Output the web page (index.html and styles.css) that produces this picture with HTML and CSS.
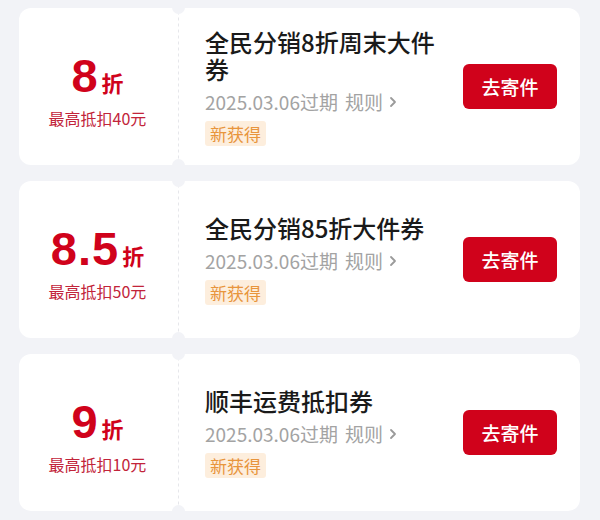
FILE: index.html
```html
<!DOCTYPE html>
<html lang="zh-CN">

<head>
    <meta charset="UTF-8">
    <title>优惠券</title>
    <link rel="stylesheet" href="styles.css">
</head>

<body>
    <div class="coupon-list">
        <div class="coupon">
            <div class="coupon-left">
                <div class="rate"><span class="rate-num">8</span><span class="rate-unit">折</span></div>
                <div class="rate-max">最高抵扣40元</div>
            </div>
            <div class="coupon-divider"></div>
            <div class="coupon-right">
                <div class="info">
                    <div class="title">全民分销8折周末大件券</div>
                    <div class="meta">2025.03.06过期 <span class="rule">规则</span>
                        <svg class="chev" width="8" height="12" viewBox="0 0 8 12"><path d="M2 2l4 4-4 4" fill="none" stroke="#9a9a9a" stroke-width="1.8" stroke-linecap="round" stroke-linejoin="round"/></svg>
                    </div>
                    <span class="tag">新获得</span>
                </div>
                <button class="go-btn">去寄件</button>
            </div>
        </div>

        <div class="coupon">
            <div class="coupon-left">
                <div class="rate"><span class="rate-num">8.5</span><span class="rate-unit">折</span></div>
                <div class="rate-max">最高抵扣50元</div>
            </div>
            <div class="coupon-divider"></div>
            <div class="coupon-right">
                <div class="info">
                    <div class="title">全民分销85折大件券</div>
                    <div class="meta">2025.03.06过期 <span class="rule">规则</span>
                        <svg class="chev" width="8" height="12" viewBox="0 0 8 12"><path d="M2 2l4 4-4 4" fill="none" stroke="#9a9a9a" stroke-width="1.8" stroke-linecap="round" stroke-linejoin="round"/></svg>
                    </div>
                    <span class="tag">新获得</span>
                </div>
                <button class="go-btn">去寄件</button>
            </div>
        </div>

        <div class="coupon">
            <div class="coupon-left">
                <div class="rate"><span class="rate-num">9</span><span class="rate-unit">折</span></div>
                <div class="rate-max">最高抵扣10元</div>
            </div>
            <div class="coupon-divider"></div>
            <div class="coupon-right">
                <div class="info">
                    <div class="title">顺丰运费抵扣券</div>
                    <div class="meta">2025.03.06过期 <span class="rule">规则</span>
                        <svg class="chev" width="8" height="12" viewBox="0 0 8 12"><path d="M2 2l4 4-4 4" fill="none" stroke="#9a9a9a" stroke-width="1.8" stroke-linecap="round" stroke-linejoin="round"/></svg>
                    </div>
                    <span class="tag">新获得</span>
                </div>
                <button class="go-btn">去寄件</button>
            </div>
        </div>
    </div>
</body>

</html>
```

FILE: styles.css
```css
* {
    box-sizing: border-box;
}

body {
    margin: 0;
    background-color: #f2f3f7;
    font-family: "Noto Sans CJK SC", "Noto Sans", sans-serif;
}

.coupon-list {
    display: flex;
    flex-direction: column;
    gap: 16px;
    padding: 8px 20px 0 19px;
}

.coupon {
    display: flex;
    height: 157px;
    background-color: #fff;
    border-radius: 12px;
}

.coupon-left {
    width: 157px;
    display: flex;
    flex-direction: column;
    align-items: center;
    justify-content: center;
    padding-top: 8px;
    color: #d0021b;
}

.rate {
    display: flex;
    align-items: baseline;
    line-height: 48px;
}

.rate-num {
    font-family: "Liberation Sans", sans-serif;
    font-weight: bold;
    font-size: 47px;
    letter-spacing: 1px;
}

.rate-unit {
    font-size: 22px;
    font-weight: bold;
    margin-left: 3px;
}

.rate-max {
    font-size: 16px;
    color: #c2243a;
    margin-top: 1px;
    line-height: 22px;
}

.coupon-divider {
    position: relative;
    width: 5px;
    background-image: linear-gradient(#e6e7eb 50%, transparent 50%);
    background-size: 1px 6px;
    background-repeat: repeat-y;
    background-position: center;
}

.coupon-divider::before,
.coupon-divider::after {
    content: "";
    position: absolute;
    left: -4px;
    width: 13px;
    height: 13px;
    border-radius: 50%;
    background-color: #f2f3f7;
}

.coupon-divider::before {
    top: -7px;
}

.coupon-divider::after {
    bottom: -7px;
}

.coupon-right {
    flex: 1;
    display: flex;
    align-items: center;
    gap: 20px;
    padding: 0 23px 0 24px;
}

.info {
    flex: 1;
}

.title {
    font-size: 24px;
    line-height: 27px;
    font-weight: 500;
    color: #1a1a1a;
}

.meta {
    display: flex;
    align-items: center;
    margin-top: 8px;
    font-size: 19px;
    line-height: 24px;
    color: #a3a3a3;
}

.rule {
    margin-left: 7px;
}

.chev {
    margin-left: 6px;
}

.tag {
    display: inline-block;
    margin-top: 7px;
    padding: 0 5px;
    font-size: 17px;
    line-height: 25px;
    color: #e8953c;
    background-color: #fdeedd;
    border-radius: 3px;
}

.go-btn {
    width: 94px;
    height: 45px;
    border: none;
    border-radius: 6px;
    background-color: #d0021b;
    color: #fff;
    font-family: inherit;
    font-size: 19px;
    font-weight: 500;
    cursor: pointer;
}
```
